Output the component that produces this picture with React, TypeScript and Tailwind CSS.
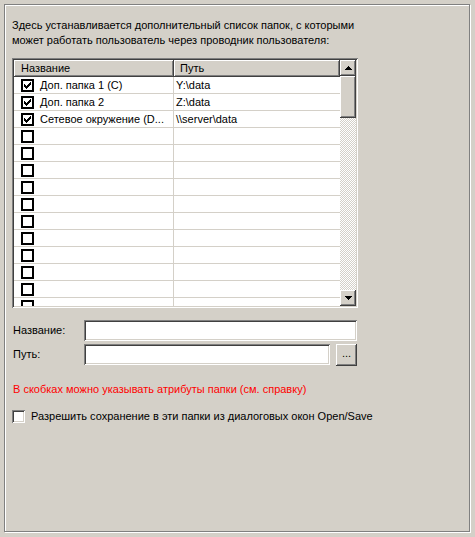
import React from "react";

const raised =
  "bg-[#d4d0c8] shadow-[inset_-1px_-1px_#404040,inset_1px_1px_#ffffff,inset_-2px_-2px_#808080,inset_2px_2px_#d4d0c8]";
const sunken =
  "shadow-[inset_1px_1px_#808080,inset_-1px_-1px_#ffffff,inset_2px_2px_#404040,inset_-2px_-2px_#d4d0c8]";

const rows = [
  { name: "Доп. папка 1 (C)", path: "Y:\\data", on: true },
  { name: "Доп. папка 2", path: "Z:\\data", on: true },
  { name: "Сетевое окружение (D...", path: "\\\\server\\data", on: true },
  ...Array.from({ length: 12 }, () => ({ name: "", path: "", on: false })),
];

function Check() {
  return (
    <svg width="7" height="7" viewBox="0 0 7 7" shapeRendering="crispEdges">
      <path
        d="M0 2h1v3h-1zM1 3h1v3h-1zM2 4h1v3h-1zM3 3h1v3h-1zM4 2h1v3h-1zM5 1h1v3h-1zM6 0h1v3h-1z"
        fill="#000"
      />
    </svg>
  );
}

function Arrow({ down }: { down?: boolean }) {
  return (
    <svg width="7" height="4" viewBox="0 0 7 4" shapeRendering="crispEdges">
      <path d={down ? "M0 0h7l-3.5 4z" : "M3.5 0l3.5 4h-7z"} fill="#000" />
    </svg>
  );
}

export default function App() {
  return (
    <div
      className="h-[537px] w-[475px] bg-[#d4d0c8] p-1 text-[11px] text-black"
      style={{ fontFamily: '"Liberation Sans", Arial, sans-serif' }}
    >
      <div className="flex h-[528px] w-[466px] flex-col border border-[#808080] pl-[7px] pt-[13px] shadow-[inset_1px_1px_#ffffff,1px_1px_#ffffff]">
        {/* Description */}
        <p className="leading-[15px]">
          Здесь устанавливается дополнительный список папок, с которыми
          <br />
          может работать пользователь через проводник пользователя:
        </p>

        {/* Folder list */}
        <div className={`mt-[10px] flex h-[250px] w-[346px] bg-white p-[2px] ${sunken}`}>
          <div className="flex-1 overflow-hidden">
            <div className="flex h-[17px]">
              <div className={`w-[160px] pl-[7px] pt-[2px] leading-[13px] ${raised}`}>Название</div>
              <div className={`flex-1 pl-[6px] pt-[2px] leading-[13px] ${raised}`}>Путь</div>
            </div>
            {rows.map((r, i) => (
              <div key={i} className="flex h-[17px] border-b border-[#d4d0c8]">
                <div className="flex w-[160px] items-center border-r border-[#d4d0c8] pl-[7px]">
                  <div className="flex h-[13px] w-[13px] shrink-0 items-center justify-center border-2 border-black bg-white">
                    {r.on && <Check />}
                  </div>
                  <span className="ml-[6px] whitespace-nowrap leading-[13px]">{r.name}</span>
                </div>
                <div className="flex flex-1 items-center pl-[2px] leading-[13px]">{r.path}</div>
              </div>
            ))}
          </div>

          {/* Scrollbar */}
          <div className="flex w-[16px] flex-col bg-[repeating-conic-gradient(#d4d0c8_0_25%,#ffffff_0_50%)] bg-[length:2px_2px]">
            <div className={`flex h-[16px] items-center justify-center ${raised}`}>
              <Arrow />
            </div>
            <div className={`h-[42px] ${raised}`} />
            <div className="flex-1" />
            <div className={`flex h-[16px] items-center justify-center ${raised}`}>
              <Arrow down />
            </div>
          </div>
        </div>

        {/* Fields */}
        <div className="mt-[12px] flex items-center">
          <span className="w-[72px] pl-[1px]">Название:</span>
          <div className={`h-[21px] w-[273px] bg-white ${sunken}`} />
        </div>
        <div className="mt-[3px] flex items-start">
          <span className="flex h-[21px] w-[72px] items-center pl-[1px]">Путь:</span>
          <div className={`h-[21px] w-[246px] bg-white ${sunken}`} />
          <button className={`ml-[6px] flex h-[22px] w-[21px] items-center justify-center pb-[3px] leading-[13px] ${raised}`}>
            ...
          </button>
        </div>

        <p className="mt-[17px] pl-[1px] leading-[13px] text-[#ff0000]">
          В скобках можно указывать атрибуты папки (см. справку)
        </p>

        <label className="mt-[14px] flex items-center">
          <span className={`h-[13px] w-[13px] bg-white ${sunken}`} />
          <span className="ml-[6px] leading-[13px]">
            Разрешить сохранение в эти папки из диалоговых окон Open/Save
          </span>
        </label>
      </div>
    </div>
  );
}
